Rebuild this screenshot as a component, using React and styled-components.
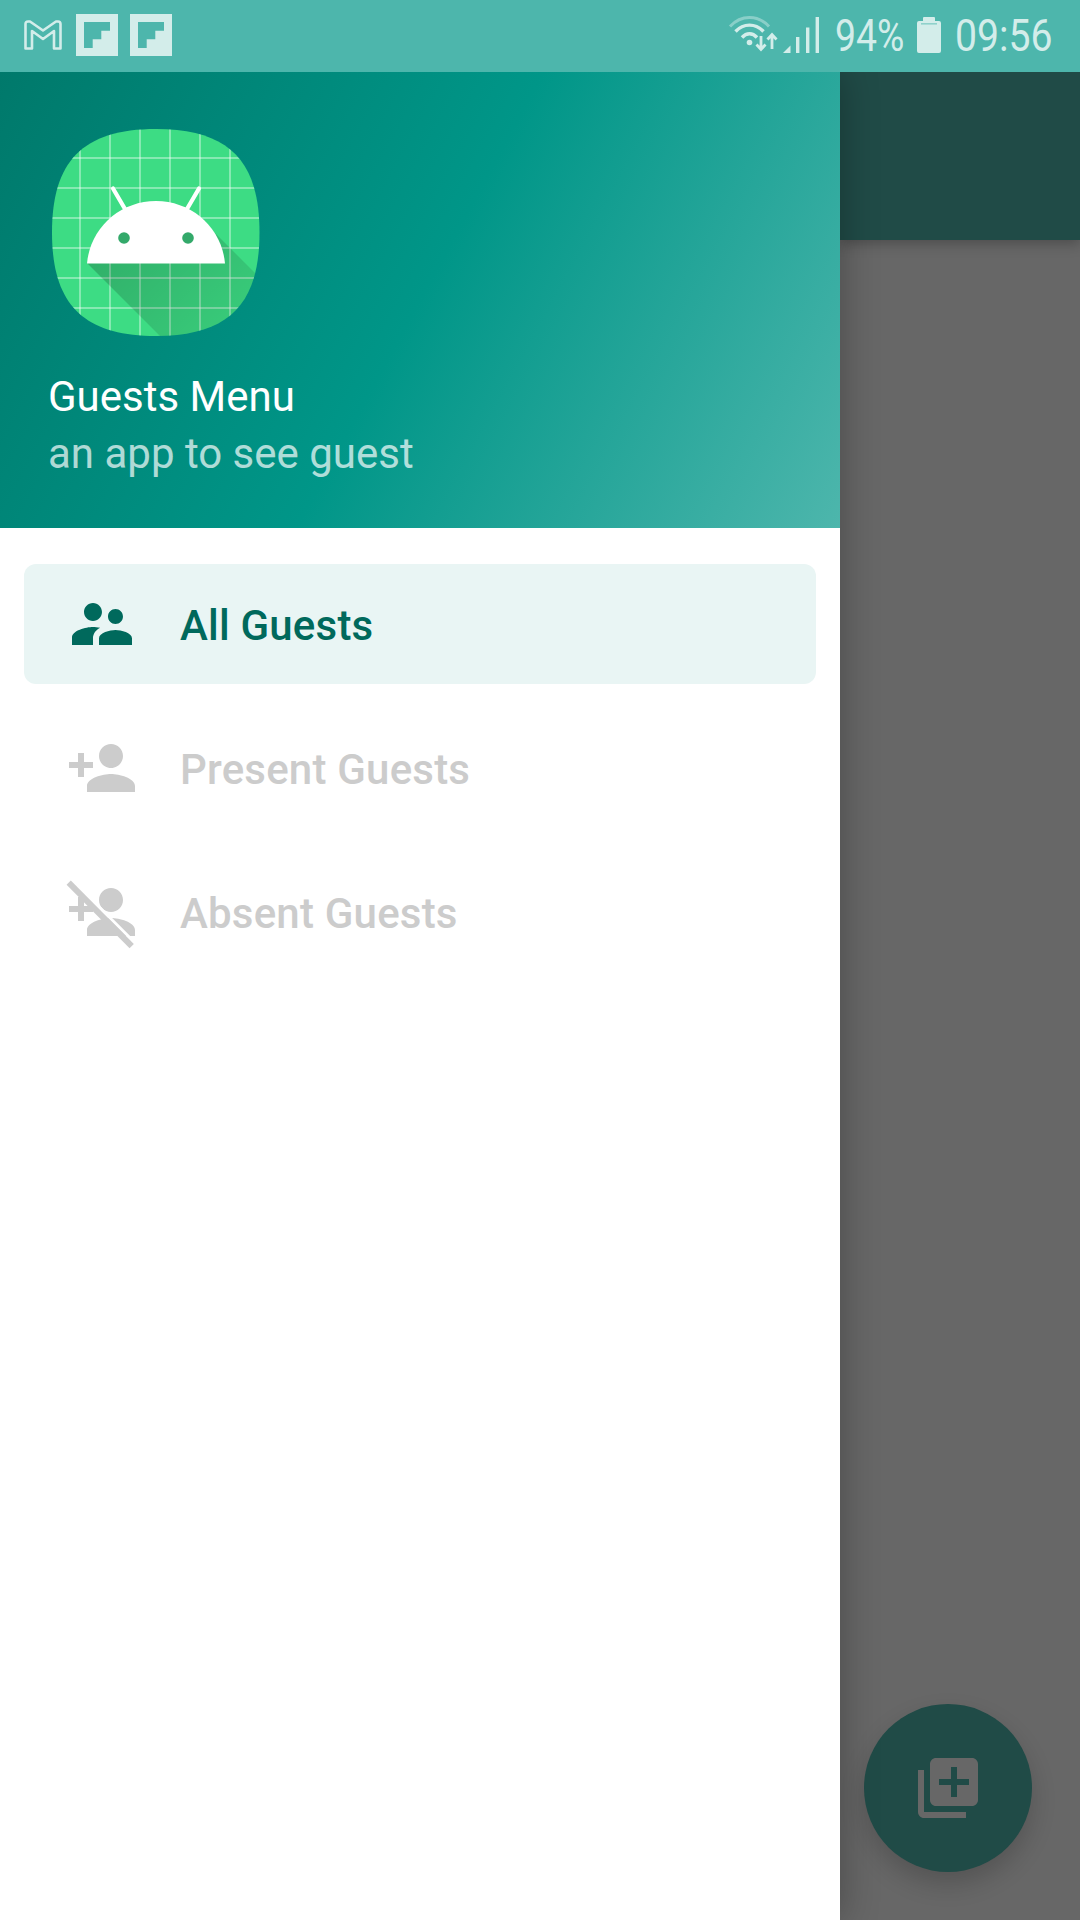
import React from "react";
import styled, { createGlobalStyle } from "styled-components";

const Global = createGlobalStyle`
  html, body { margin: 0; padding: 0; background: #676767; }
  * { box-sizing: border-box; }
`;

const Screen = styled.div`
  width: 1080px;
  height: 1920px;
  display: flex;
  flex-direction: column;
  overflow: hidden;
  font-family: Roboto, "Liberation Sans", sans-serif;
`;

const StatusBar = styled.header`
  height: 72px;
  flex: none;
  display: flex;
  align-items: center;
  justify-content: space-between;
  padding: 0 30px 2px 24px;
  background: #4db6ac;
  color: #d3edea;
  position: relative;
  z-index: 3;
`;

const NotifIcons = styled.div`
  display: flex;
  align-items: center;
  gap: 12px;
`;

const SystemIcons = styled.div`
  display: flex;
  align-items: center;
  gap: 14px;
`;

const Connectivity = styled.div`
  display: flex;
  align-items: center;
  gap: 6px;
  margin-right: 2px;
`;

const StatusText = styled.span`
  display: block;
  width: ${(p) => p.$width}px;
  margin-top: 2px;
  white-space: nowrap;
  font-size: 45px;
  line-height: 70px;
  font-weight: 400;
  transform-origin: left center;
  transform: scaleX(${(p) => p.$squeeze});
`;

const Body = styled.main`
  flex: 1;
  display: flex;
  min-height: 0;
`;

const Drawer = styled.nav`
  width: 840px;
  flex: none;
  background: #fff;
  display: flex;
  flex-direction: column;
  box-shadow: 0 0 36px rgba(0, 0, 0, 0.3);
  position: relative;
  z-index: 2;
`;

const DrawerHeader = styled.div`
  height: 456px;
  flex: none;
  display: flex;
  flex-direction: column;
  padding: 52px 48px 0;
  background: linear-gradient(118.5deg, #00796b 0%, #009688 50%, #4db6ac 100%);
`;

const Logo = styled.svg`
  width: 216px;
  height: 216px;
  display: block;
  flex: none;
`;

const Title = styled.div`
  margin-top: 28px;
  font-size: 42px;
  line-height: 57px;
  color: #fff;
`;

const Subtitle = styled.div`
  font-size: 42px;
  line-height: 57px;
  color: rgba(255, 255, 255, 0.7);
`;

const Menu = styled.ul`
  list-style: none;
  margin: 0;
  padding: 36px 24px 0;
  display: flex;
  flex-direction: column;
  gap: 24px;
`;

const Item = styled.li`
  height: 120px;
  display: flex;
  align-items: center;
  gap: 42px;
  padding-left: 42px;
  border-radius: 12px;
  background: ${(p) => (p.$active ? "#e9f5f4" : "transparent")};
  color: ${(p) => (p.$active ? "#00695c" : "#cccccc")};
  font-size: 42px;
  font-weight: 500;
  letter-spacing: 0.2px;
`;

const ItemLabel = styled.span`
  padding-top: 2px;
`;

const ItemIcon = styled.svg`
  width: 72px;
  height: 72px;
  flex: none;
  fill: currentColor;
  overflow: visible;
`;

const Backdrop = styled.section`
  flex: 1;
  position: relative;
  background: #676767;
`;

const Toolbar = styled.div`
  height: 168px;
  background: #204b47;
  box-shadow: 0 4px 12px rgba(0, 0, 0, 0.25);
`;

const Fab = styled.button`
  position: absolute;
  right: 48px;
  bottom: 48px;
  width: 168px;
  height: 168px;
  border: 0;
  border-radius: 50%;
  padding: 0;
  background: #204b47;
  display: flex;
  align-items: center;
  justify-content: center;
  box-shadow: 0 12px 24px rgba(0, 0, 0, 0.18);
`;

const FabIcon = styled.svg`
  width: 72px;
  height: 72px;
  fill: #676767;
`;

const Glyph = styled.svg`
  display: block;
  flex: none;
  overflow: visible;
`;

const MailGlyph = styled(Glyph)`
  margin-right: 2px;
`;

const MailIcon = () => (
  <MailGlyph width="38" height="30" viewBox="0 0 38 30" fill="none" stroke="#d3edea" strokeWidth="2.6" strokeLinejoin="round">
    <path d="M1.5 28.5V4Q1.5 1.5 4 1.5H6L19 10.5L32 1.5H34Q36.5 1.5 36.5 4V28.5H30V11L19 19L8 11V28.5Z" />
  </MailGlyph>
);

const FlipIcon = () => (
  <Glyph width="42" height="42" viewBox="0 0 42 42">
    <rect width="42" height="42" fill="#d3edea" />
    <path d="M8 8H34V16.7H25.3V25.3H16.7V34H8Z" fill="#4db6ac" />
  </Glyph>
);

const WifiIcon = () => (
  <Glyph width="48" height="38" viewBox="0 0 48 38" fill="none" stroke="#d3edea">
    <path d="M1 10.5C12 -1.5 29 -1.5 40 10.5" strokeWidth="3" opacity="0.45" />
    <path d="M6.5 15.5C14.5 7 26.5 7 34.5 15.5" strokeWidth="3.4" />
    <path d="M13 21.5C17.5 16.5 23.5 16.5 28 21.5" strokeWidth="3.4" />
    <circle cx="20.5" cy="26.5" r="2.8" fill="#d3edea" stroke="none" />
    <path d="M32 20V33M27.5 28.5L32 33.5L36.5 28.5" strokeWidth="2.8" />
    <path d="M43 33V19M38.5 23.5L43 18.5L47.5 23.5" strokeWidth="2.8" />
  </Glyph>
);

const SignalIcon = () => (
  <Glyph width="36" height="36" viewBox="0 0 36 36" fill="#d3edea">
    <path d="M0 36L7.5 28.5V36Z" />
    <rect x="13" y="20" width="3.4" height="16" />
    <rect x="23" y="10.5" width="3.4" height="25.5" />
    <rect x="32.6" y="0" width="3.4" height="36" />
  </Glyph>
);

const BatteryIcon = () => (
  <Glyph width="24" height="36" viewBox="0 0 24 36" fill="#d3edea">
    <path d="M7 0H17Q18 0 18 1V4H22Q24 4 24 6V34Q24 36 22 36H2Q0 36 0 34V6Q0 4 2 4H6V1Q6 0 7 0Z" />
    <rect x="4" y="6.5" width="16" height="0.8" fill="#4db6ac" />
  </Glyph>
);

const gridXs = [80, 110, 140, 170, 200, 230];
const gridYs = [158, 188, 218, 248, 278, 308];
const SQUIRCLE = "M156 129C230 129 259.5 162 259.5 232.5C259.5 303 230 336 156 336C82 336 52 303 52 232.5C52 162 82 129 156 129Z";

const AndroidLogo = () => (
  <Logo viewBox="48 124 216 216">
    <defs>
      <clipPath id="sq"><path d={SQUIRCLE} /></clipPath>
      <linearGradient id="sh" x1="0" y1="0" x2="1" y2="0.6">
        <stop offset="0" stopColor="#000" stopOpacity="0.22" />
        <stop offset="1" stopColor="#000" stopOpacity="0.08" />
      </linearGradient>
    </defs>
    <path d={SQUIRCLE} fill="#3ddc84" />
    <g clipPath="url(#sq)">
      {gridXs.map((x) => (
        <rect key={x} x={x - 0.9} y="124" width="1.8" height="216" fill="#fff" fillOpacity="0.42" />
      ))}
      {gridYs.map((y) => (
        <rect key={y} x="48" y={y - 0.9} width="216" height="1.8" fill="#fff" fillOpacity="0.42" />
      ))}
      <path d="M87 263L160 336H264V282L215 233L200 240L87 263Z" fill="url(#sh)" />
    </g>
    <path d="M113 188.5L125 209M199 188.5L187 209" stroke="#fff" strokeWidth="4.2" strokeLinecap="round" />
    <path d="M87 263.5C90 228 120 201 156 201C192 201 222 228 225 263.5Z" fill="#fff" />
    <circle cx="124" cy="238" r="5.8" fill="#33a96a" />
    <circle cx="188" cy="238" r="5.8" fill="#33a96a" />
  </Logo>
);

const PEOPLE = "M16.5 12c1.38 0 2.49-1.12 2.49-2.5S17.88 7 16.5 7C15.12 7 14 8.12 14 9.5s1.12 2.5 2.5 2.5zM9 11c1.66 0 2.99-1.34 2.99-3S10.66 5 9 5C7.34 5 6 6.34 6 8s1.34 3 3 3zm7.5 3c-1.83 0-5.5.92-5.5 2.75V19h11v-2.25c0-1.83-3.67-2.75-5.5-2.75zM9 13c-2.33 0-7 1.17-7 3.5V19h7v-2.25c0-.85.33-2.34 2.37-3.47C10.5 13.1 9.66 13 9 13z";
const PERSON_ADD = "M15 12c2.21 0 4-1.79 4-4s-1.79-4-4-4-4 1.79-4 4 1.79 4 4 4zm-9-2V7H4v3H1v2h3v3h2v-3h3v-2H6zm9 4c-2.67 0-8 1.34-8 4v2h16v-2c0-2.66-5.33-4-8-4z";
const LIBRARY_ADD = "M4 6H2v14c0 1.1.9 2 2 2h14v-2H4V6zm16-4H8c-1.1 0-2 .9-2 2v12c0 1.1.9 2 2 2h12c1.1 0 2-.9 2-2V4c0-1.1-.9-2-2-2zm-1 9h-4v4h-2v-4H9V9h4V5h2v4h4v2z";

export default function App() {
  return (
    <Screen>
      <Global />
      <StatusBar>
        <NotifIcons>
          <MailIcon />
          <FlipIcon />
          <FlipIcon />
        </NotifIcons>
        <SystemIcons>
          <Connectivity>
            <WifiIcon />
            <SignalIcon />
          </Connectivity>
          <StatusText $width={68} $squeeze={0.83}>94%</StatusText>
          <BatteryIcon />
          <StatusText $width={95} $squeeze={0.87}>09:56</StatusText>
        </SystemIcons>
      </StatusBar>
      <Body>
        <Drawer>
          <DrawerHeader>
            <AndroidLogo />
            <Title>Guests Menu</Title>
            <Subtitle>an app to see guest</Subtitle>
          </DrawerHeader>
          <Menu>
            <Item $active>
              <ItemIcon viewBox="0 0 24 24"><path d={PEOPLE} /></ItemIcon>
              <ItemLabel>All Guests</ItemLabel>
            </Item>
            <Item>
              <ItemIcon viewBox="0 0 24 24"><path d={PERSON_ADD} /></ItemIcon>
              <ItemLabel>Present Guests</ItemLabel>
            </Item>
            <Item>
              <ItemIcon viewBox="0 0 24 24">
                <path d={PERSON_ADD} />
                <path d="M2.2 1.5L22.8 22.1" stroke="#fff" strokeWidth="1" />
                <path d="M.9 2.2L21.9 23.4" stroke="#cccccc" strokeWidth="2" />
              </ItemIcon>
              <ItemLabel>Absent Guests</ItemLabel>
            </Item>
          </Menu>
        </Drawer>
        <Backdrop>
          <Toolbar />
          <Fab aria-label="Add">
            <FabIcon viewBox="0 0 24 24"><path d={LIBRARY_ADD} /></FabIcon>
          </Fab>
        </Backdrop>
      </Body>
    </Screen>
  );
}
